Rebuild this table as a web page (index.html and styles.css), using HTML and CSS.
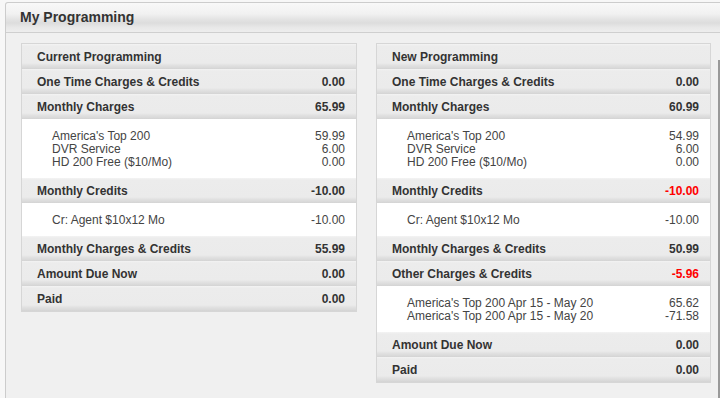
FILE: index.html
```html
<!DOCTYPE html>
<html>
<head>
<meta charset="utf-8">
<title>My Programming</title>
<link rel="stylesheet" href="styles.css">
</head>
<body>
<div class="panel">
  <div class="panel-head">My Programming</div>
  <div class="panel-body">
    <div class="box box-left">
      <div class="row"><span>Current Programming</span></div>
      <div class="row"><span>One Time Charges &amp; Credits</span><span>0.00</span></div>
      <div class="row"><span>Monthly Charges</span><span>65.99</span></div>
      <div class="detail">
        <div class="item"><span>America's Top 200</span><span>59.99</span></div>
        <div class="item"><span>DVR Service</span><span>6.00</span></div>
        <div class="item"><span>HD 200 Free ($10/Mo)</span><span>0.00</span></div>
      </div>
      <div class="row"><span>Monthly Credits</span><span>-10.00</span></div>
      <div class="detail">
        <div class="item"><span>Cr: Agent $10x12 Mo</span><span>-10.00</span></div>
      </div>
      <div class="row"><span>Monthly Charges &amp; Credits</span><span>55.99</span></div>
      <div class="row"><span>Amount Due Now</span><span>0.00</span></div>
      <div class="row"><span>Paid</span><span>0.00</span></div>
    </div>
    <div class="box box-right">
      <div class="row"><span>New Programming</span></div>
      <div class="row"><span>One Time Charges &amp; Credits</span><span>0.00</span></div>
      <div class="row"><span>Monthly Charges</span><span>60.99</span></div>
      <div class="detail">
        <div class="item"><span>America's Top 200</span><span>54.99</span></div>
        <div class="item"><span>DVR Service</span><span>6.00</span></div>
        <div class="item"><span>HD 200 Free ($10/Mo)</span><span>0.00</span></div>
      </div>
      <div class="row"><span>Monthly Credits</span><span class="neg">-10.00</span></div>
      <div class="detail">
        <div class="item"><span>Cr: Agent $10x12 Mo</span><span>-10.00</span></div>
      </div>
      <div class="row"><span>Monthly Charges &amp; Credits</span><span>50.99</span></div>
      <div class="row"><span>Other Charges &amp; Credits</span><span class="neg">-5.96</span></div>
      <div class="detail">
        <div class="item"><span>America's Top 200 Apr 15 - May 20</span><span>65.62</span></div>
        <div class="item"><span>America's Top 200 Apr 15 - May 20</span><span>-71.58</span></div>
      </div>
      <div class="row"><span>Amount Due Now</span><span>0.00</span></div>
      <div class="row"><span>Paid</span><span>0.00</span></div>
    </div>
  </div>
</div>
<div class="scroll-edge"></div>
</body>
</html>
```

FILE: styles.css
```css
html, body {
  margin: 0;
  padding: 0;
}
body {
  background: #f7f7f7;
  font-family: "Liberation Sans", Arial, sans-serif;
  width: 720px;
  height: 398px;
  overflow: hidden;
  position: relative;
}
.panel {
  margin: 2px 0 0 5px;
  width: 730px;
  height: 396px;
  border: 1px solid #cccccc;
  border-bottom: none;
  border-radius: 3px 0 0 0;
  background: #f0f0f0;
  box-sizing: border-box;
  overflow: hidden;
}
.panel-head {
  height: 29px;
  line-height: 29px;
  padding-left: 14px;
  font-size: 14px;
  font-weight: bold;
  color: #333333;
  border-bottom: 1px solid #cfcfcf;
  background: linear-gradient(to bottom, #f8f8f8 0, #f1f1f1 11px, #e2e2e2 17px, #dddddd 20px, #e7e7e7 24px, #eeeeee 29px);
  border-radius: 3px 0 0 0;
}
.panel-body {
  display: flex;
  align-items: flex-start;
  gap: 19px;
  padding: 10px 0 0 15px;
}
.box {
  border: 1px solid #d6d6d6;
  background: #ffffff;
  box-sizing: border-box;
}
.box-left { width: 336px; }
.box-right { width: 335px; }
.row {
  display: flex;
  justify-content: space-between;
  box-sizing: border-box;
  height: 25px;
  padding: 1px 11px 0 15px;
  line-height: 24px;
  font-size: 12px;
  font-weight: bold;
  color: #333333;
  background: linear-gradient(to bottom, #f3f3f3 0, #ececec 2px, #ebebeb 19px, #e2e2e2 21px, #d8d8d8 24px, #d3d3d3 25px);
}
.detail {
  padding: 11px 11px 9px 30px;
  background: #ffffff;
}
.item {
  display: flex;
  justify-content: space-between;
  font-size: 12px;
  line-height: 13px;
  color: #444444;
}
.neg {
  color: #ff0000;
}
.scroll-edge {
  position: absolute;
  right: 0;
  top: 60px;
  width: 2px;
  height: 338px;
  background: #999999;
}
```
